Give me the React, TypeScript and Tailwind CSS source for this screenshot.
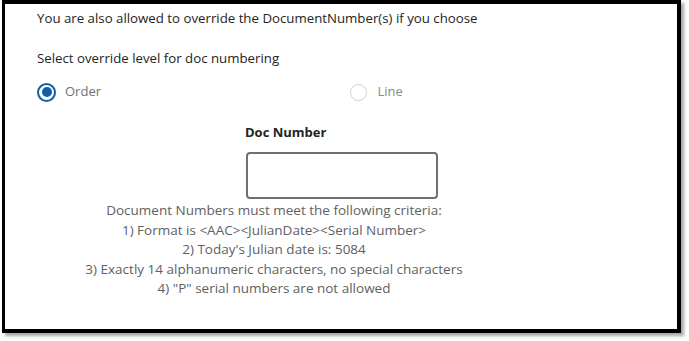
export default function App() {
    return (
        <div className="w-[689px] h-[341px] bg-white" style={{ fontFamily: '"Open Sans", "Noto Sans", sans-serif' }}>
            <div className="ml-[2px] w-[679px] h-[333px] border-[4px] border-l-[3px] border-black bg-white shadow-[3px_3px_3px_rgba(0,0,0,0.35)]">
                <div className="pl-[32px] pr-[15px] pt-[4px] text-[13px]">
                    <p className="leading-5 text-[13.25px] text-[#242424]">You are also allowed to override the DocumentNumber(s) if you choose</p>
                    <p className="mt-5 leading-5 text-[13.25px] text-[#242424]">Select override level for doc numbering</p>

                    {/* override level radios */}
                    <div className="mt-[14px] grid grid-cols-2">
                        <label className="flex items-center gap-[9px] h-5">
                            <span className="h-[19px] w-[19px] rounded-full border-2 border-[#115ea3] flex items-center justify-center">
                                <span className="h-[10px] w-[10px] rounded-full bg-[#115ea3]" />
                            </span>
                            <span className="text-[#707070]">Order</span>
                        </label>
                        <label className="flex items-center gap-[11px] h-5">
                            <span className="h-[17px] w-[17px] rounded-full border border-[#d1d1d1]" />
                            <span className="text-[#8a8a8a]">Line</span>
                        </label>
                    </div>

                    <p className="mt-5 ml-[208px] leading-5 font-bold text-[#242424]">Doc Number</p>
                    <input
                        type="text"
                        className="mt-[10px] ml-[209px] block w-[192px] h-[47px] rounded-[4px] border-2 border-[#6e7078] outline-none"
                    />

                    <div className="mt-[2px] w-[474px] text-center text-[13.5px] leading-[19.5px] text-[#616161]">
                        <p>Document Numbers must meet the following criteria:</p>
                        <p>1) Format is &lt;AAC&gt;&lt;JulianDate&gt;&lt;Serial Number&gt;</p>
                        <p>2) Today's Julian date is: 5084</p>
                        <p>3) Exactly 14 alphanumeric characters, no special characters</p>
                        <p>4) "P" serial numbers are not allowed</p>
                    </div>
                </div>
            </div>
        </div>
    )
}
